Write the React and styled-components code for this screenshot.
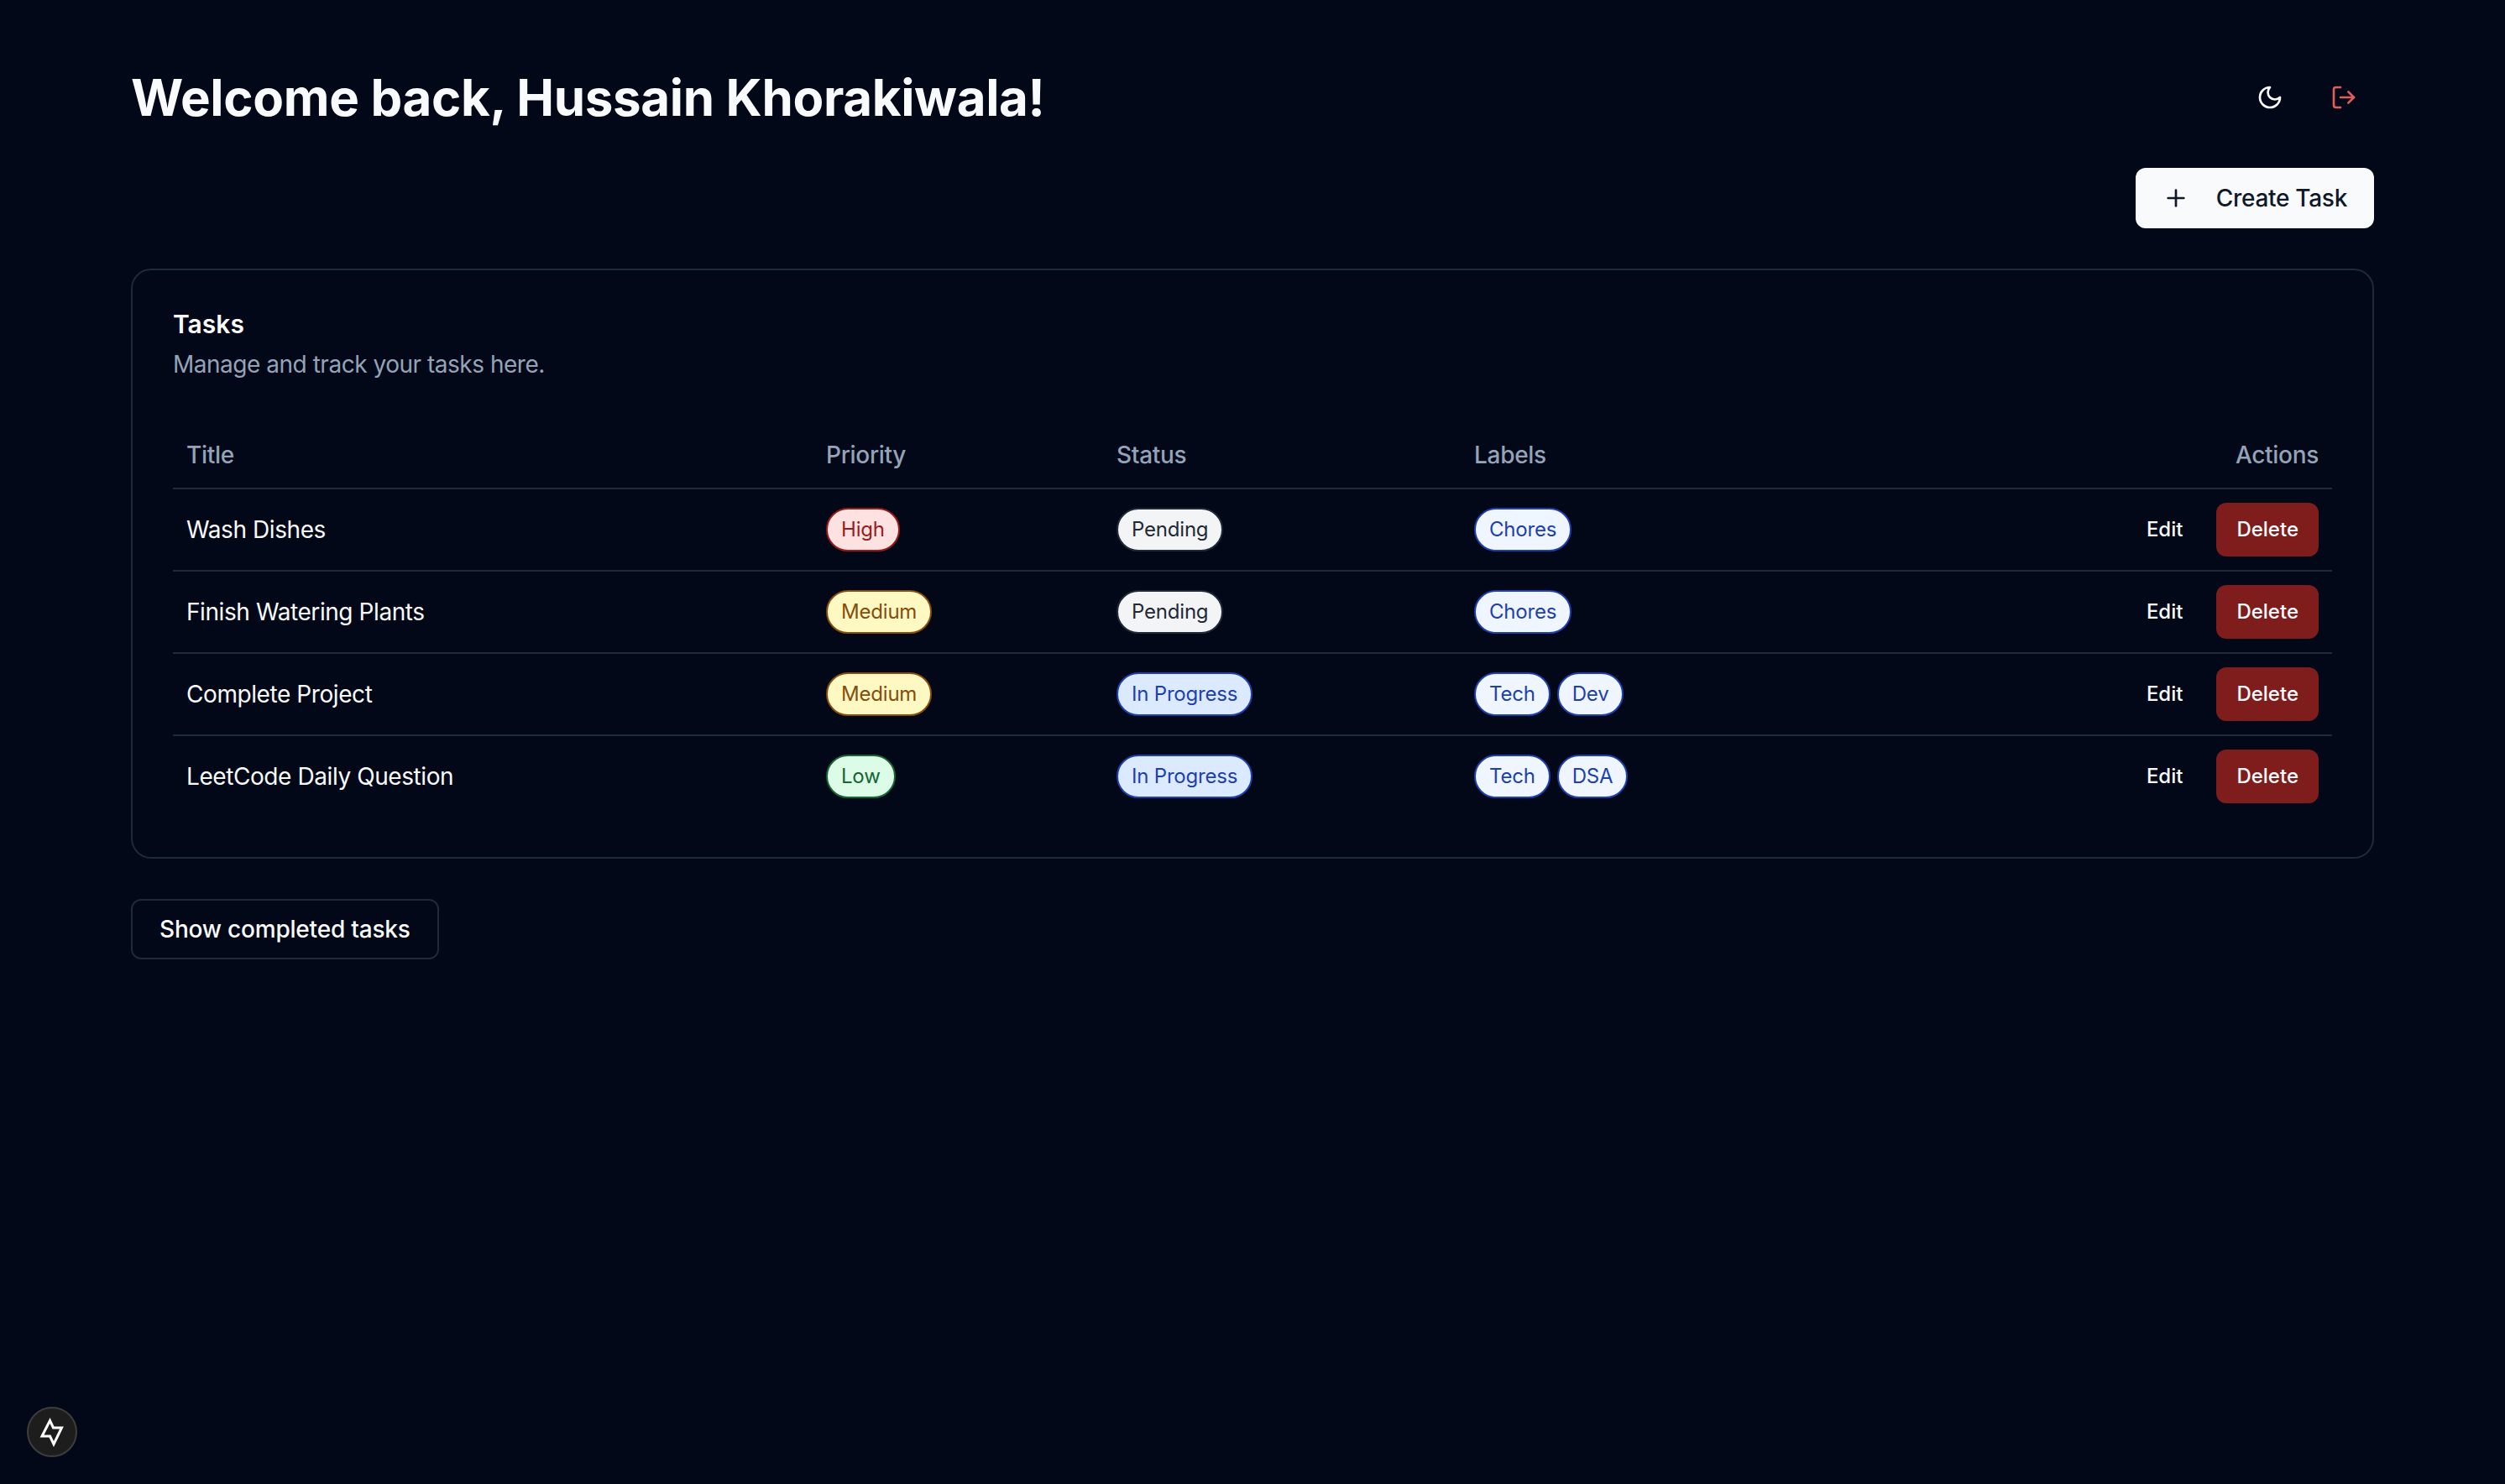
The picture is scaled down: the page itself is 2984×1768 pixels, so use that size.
import React from "react";
import styled, { createGlobalStyle } from "styled-components";
import { LogOut, Plus } from "lucide-react";

const GlobalStyle = createGlobalStyle`
  html, body {
    margin: 0;
    background: #020817;
    color: #f8fafc;
    font-family: Inter, "Liberation Sans", sans-serif;
  }
  * {
    box-sizing: border-box;
  }
`;

const BADGE_COLORS = {
  high: { bg: "#fee2e2", fg: "#991b1b" },
  medium: { bg: "#fef9c3", fg: "#854d0e" },
  low: { bg: "#dcfce7", fg: "#166534" },
  pending: { bg: "#f3f4f6", fg: "#1f2937" },
  progress: { bg: "#dbeafe", fg: "#1e40af" },
  label: { bg: "#eff6ff", fg: "#1e40af" },
};

// STYLED COMPONENTS

const Page = styled.div`
  min-height: 1768px;
  padding: 80px 156px;
`;

const Header = styled.header`
  display: flex;
  align-items: center;
  justify-content: space-between;
  height: 72px;
  margin-bottom: 48px;
`;

const Heading = styled.h1`
  margin: 0;
  font-size: 60px;
  line-height: 72px;
  font-weight: 700;
  letter-spacing: -0.33px;
`;

const HeaderActions = styled.div`
  display: flex;
  gap: 16px;
`;

const IconButton = styled.button`
  display: flex;
  align-items: center;
  justify-content: center;
  width: 72px;
  height: 72px;
  padding: 0;
  border: 0;
  background: transparent;
  color: ${(p) => (p.$danger ? "#e25c5c" : "#f8fafc")};
`;

const Toolbar = styled.div`
  display: flex;
  justify-content: flex-end;
  margin-bottom: 48px;
`;

const CreateButton = styled.button`
  display: flex;
  align-items: center;
  gap: 32px;
  height: 72px;
  padding: 0 32px;
  border: 0;
  border-radius: 12px;
  background: #f8fafc;
  color: #0f172a;
  font: 500 28px/40px Inter, sans-serif;
  letter-spacing: -0.3px;
`;

const Card = styled.section`
  padding: 48px;
  border: 2px solid #1e293b;
  border-radius: 24px;
`;

const CardTitle = styled.h2`
  margin: 0 0 12px;
  font-size: 30px;
  line-height: 32px;
  font-weight: 600;
`;

const CardText = styled.p`
  margin: 0 0 49px;
  font-size: 28px;
  line-height: 40px;
  letter-spacing: -0.48px;
  color: #94a3b8;
`;

const Table = styled.table`
  width: 100%;
  table-layout: fixed;
  border-collapse: separate;
  border-spacing: 0;
  font-size: 28px;
`;

const Column = styled.col`
  width: ${(p) => p.$width}px;
`;

const HeadCell = styled.th`
  height: 80px;
  padding: 0 16px;
  border-bottom: 2px solid #1e293b;
  color: #94a3b8;
  font-weight: 500;
  letter-spacing: -0.3px;
  text-align: ${(p) => (p.$right ? "right" : "left")};
`;

const Cell = styled.td`
  padding: 16px;
  border-bottom: ${(p) => (p.$last ? "0" : "2px solid #1e293b")};
  font-weight: 400;
  line-height: 40px;
  letter-spacing: -0.42px;
`;

const BadgeRow = styled.div`
  display: flex;
  gap: 8px;
`;

const Badge = styled.span`
  display: inline-flex;
  align-items: center;
  height: 52px;
  padding: 0 16px;
  border: 2px solid ${(p) => BADGE_COLORS[p.$kind].fg};
  border-radius: 999px;
  background: ${(p) => BADGE_COLORS[p.$kind].bg};
  color: ${(p) => BADGE_COLORS[p.$kind].fg};
  font-size: 24px;
  line-height: 32px;
  font-weight: 400;
  letter-spacing: -0.2px;
`;

const RowActions = styled.div`
  display: flex;
  justify-content: flex-end;
  gap: 16px;
`;

const SmallButton = styled.button`
  height: 64px;
  padding: 0 24px;
  border: 0;
  border-radius: 12px;
  background: ${(p) => (p.$danger ? "#7f1d1d" : "transparent")};
  color: #f8fafc;
  font: 500 24px/32px Inter, sans-serif;
`;

const OutlineButton = styled.button`
  display: block;
  height: 72px;
  margin-top: 48px;
  padding: 0 32px;
  border: 2px solid #1e293b;
  border-radius: 12px;
  background: #020817;
  color: #f8fafc;
  font: 500 28px/40px Inter, sans-serif;
  letter-spacing: -0.2px;
`;

const DevBadge = styled.div`
  position: fixed;
  left: 32px;
  bottom: 32px;
  display: flex;
  align-items: center;
  justify-content: center;
  width: 60px;
  height: 60px;
  border: 2px solid #3d3d3d;
  border-radius: 50%;
  background: #1d1d1d;
`;

const tasks = [
  {
    title: "Wash Dishes",
    priority: ["high", "High"],
    status: ["pending", "Pending"],
    labels: ["Chores"],
  },
  {
    title: "Finish Watering Plants",
    priority: ["medium", "Medium"],
    status: ["pending", "Pending"],
    labels: ["Chores"],
  },
  {
    title: "Complete Project",
    priority: ["medium", "Medium"],
    status: ["progress", "In Progress"],
    labels: ["Tech", "Dev"],
  },
  {
    title: "LeetCode Daily Question",
    priority: ["low", "Low"],
    status: ["progress", "In Progress"],
    labels: ["Tech", "DSA"],
  },
];

const MoonIcon = () => (
  <svg
    width="32"
    height="32"
    viewBox="0 0 24 24"
    fill="none"
    stroke="currentColor"
    strokeWidth="2"
    strokeLinecap="round"
    strokeLinejoin="round"
  >
    <path d="M12 3a6 6 0 0 0 9 9 9 9 0 1 1-9-9Z" />
  </svg>
);

export default function App() {
  return (
    <Page>
      <GlobalStyle />
      <Header>
        <Heading>Welcome back, Hussain Khorakiwala!</Heading>
        <HeaderActions>
          <IconButton aria-label="Toggle theme">
            <MoonIcon />
          </IconButton>
          <IconButton $danger aria-label="Log out">
            <LogOut size={32} />
          </IconButton>
        </HeaderActions>
      </Header>
      <Toolbar>
        <CreateButton>
          <Plus size={32} />
          Create Task
        </CreateButton>
      </Toolbar>
      <Card>
        <CardTitle>Tasks</CardTitle>
        <CardText>Manage and track your tasks here.</CardText>
        <Table>
          <colgroup>
            <Column $width={762} />
            <Column $width={346} />
            <Column $width={426} />
            <Column $width={600} />
            <Column />
          </colgroup>
          <thead>
            <tr>
              <HeadCell>Title</HeadCell>
              <HeadCell>Priority</HeadCell>
              <HeadCell>Status</HeadCell>
              <HeadCell>Labels</HeadCell>
              <HeadCell $right>Actions</HeadCell>
            </tr>
          </thead>
          <tbody>
            {tasks.map((task, i) => {
              const last = i === tasks.length - 1;
              return (
                <tr key={task.title}>
                  <Cell $last={last}>{task.title}</Cell>
                  <Cell $last={last}>
                    <Badge $kind={task.priority[0]}>{task.priority[1]}</Badge>
                  </Cell>
                  <Cell $last={last}>
                    <Badge $kind={task.status[0]}>{task.status[1]}</Badge>
                  </Cell>
                  <Cell $last={last}>
                    <BadgeRow>
                      {task.labels.map((label) => (
                        <Badge $kind="label" key={label}>
                          {label}
                        </Badge>
                      ))}
                    </BadgeRow>
                  </Cell>
                  <Cell $last={last}>
                    <RowActions>
                      <SmallButton>Edit</SmallButton>
                      <SmallButton $danger>Delete</SmallButton>
                    </RowActions>
                  </Cell>
                </tr>
              );
            })}
          </tbody>
        </Table>
      </Card>
      <OutlineButton>Show completed tasks</OutlineButton>
      <DevBadge>
        <svg width="36" height="36" viewBox="0 0 36 36" fill="none">
          <path
            d="M15.5 4.5 L6 23 H15.5 L20 32.5 L29.5 13 H19.5 Z"
            stroke="#fff"
            strokeWidth="3"
            strokeLinejoin="miter"
          />
        </svg>
      </DevBadge>
    </Page>
  );
}
